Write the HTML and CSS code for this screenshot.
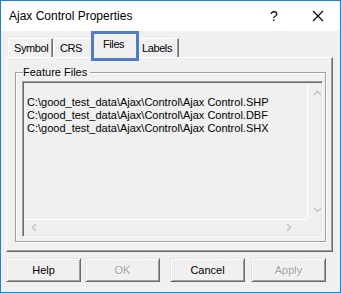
FILE: index.html
```html
<!DOCTYPE html>
<html lang="en">
<head>
    <meta charset="UTF-8">
    <title>Ajax Control Properties</title>
    <link rel="stylesheet" href="styles.css">
</head>
<body>

    <div class="dialog">
        <div class="title-bar">
            <span class="title">Ajax Control Properties</span>
            <span class="title-help">?</span>
            <span class="title-close">
                <svg width="12" height="12" viewBox="0 0 12 12"><path d="M1 1L11 11M11 1L1 11" stroke="#000" stroke-width="1.1" fill="none"/></svg>
            </span>
        </div>

        <div class="dialog-body">
            <div class="tabs">
                <div class="tab">Symbol</div>
                <div class="tab">CRS</div>
                <div class="tab tab-active">Files<span class="highlight"></span></div>
                <div class="tab">Labels</div>
            </div>

            <div class="tab-panel">
                <fieldset class="group">
                    <legend>Feature Files</legend>
                    <div class="list-box">
                        <div class="list-items">
                            <div class="list-item">&nbsp;</div>
                            <div class="list-item">C:\good_test_data\Ajax\Control\Ajax Control.SHP</div>
                            <div class="list-item">C:\good_test_data\Ajax\Control\Ajax Control.DBF</div>
                            <div class="list-item">C:\good_test_data\Ajax\Control\Ajax Control.SHX</div>
                        </div>
                        <div class="vscroll">
                            <svg width="9" height="6" viewBox="0 0 9 6"><path d="M1 5L4.5 1.5L8 5" stroke="#c6c6c6" stroke-width="1.6" fill="none"/></svg>
                            <svg width="9" height="6" viewBox="0 0 9 6"><path d="M1 1L4.5 4.5L8 1" stroke="#c6c6c6" stroke-width="1.6" fill="none"/></svg>
                        </div>
                        <div class="hscroll">
                            <svg width="6" height="9" viewBox="0 0 6 9"><path d="M5 1L1.5 4.5L5 8" stroke="#c6c6c6" stroke-width="1.6" fill="none"/></svg>
                            <svg width="6" height="9" viewBox="0 0 6 9"><path d="M1 1L4.5 4.5L1 8" stroke="#c6c6c6" stroke-width="1.6" fill="none"/></svg>
                        </div>
                        <div class="corner"></div>
                    </div>
                </fieldset>
            </div>

            <div class="buttons">
                <button class="btn">Help</button>
                <button class="btn" disabled>OK</button>
                <button class="btn btn-gap">Cancel</button>
                <button class="btn btn-gap" disabled>Apply</button>
            </div>
        </div>
    </div>

</body>
</html>
```

FILE: styles.css
```css
body {
    margin: 0;
    padding: 0;
    background-color: #fff;
    font-family: 'Liberation Sans', Arial, sans-serif;
    font-size: 11px;
}

.dialog {
    width: 341px;
    height: 293px;
    box-sizing: border-box;
    border: 1px solid #1883d7;
    display: flex;
    flex-direction: column;
    background-color: #f0f0f0;
}

.title-bar {
    height: 30px;
    background-color: #fff;
    display: flex;
    align-items: center;
    font-size: 12px;
    color: #000;
}

.title {
    padding-left: 8px;
    flex: 1;
}

.title-help {
    width: 12px;
    font-size: 14px;
    margin-right: 30px;
}

.title-close {
    display: flex;
    margin-right: 16px;
}

.dialog-body {
    flex: 1;
    padding: 2px 7px 0 5px;
    display: flex;
    flex-direction: column;
}

.tabs {
    display: flex;
    align-items: flex-end;
    height: 24px;
    padding-left: 2px;
    position: relative;
    z-index: 1;
}

.tab {
    height: 19px;
    line-height: 18px;
    padding: 0 5px;
    box-sizing: border-box;
    border-top: 1px solid #fff;
    border-left: 1px solid #fff;
    border-right: 1px solid #696969;
    box-shadow: inset -1px 0 0 #a0a0a0;
    color: #000;
    letter-spacing: -0.4px;
    white-space: nowrap;
}

.tab:first-child {
    width: 45px;
}

.tab:nth-child(2) {
    width: 40px;
    padding-left: 6px;
}

.tab:last-child {
    width: 41px;
    padding-left: 3px;
}

.tab-active {
    position: relative;
    width: 47px;
    height: 25px;
    line-height: 20px;
    padding-left: 10px;
    margin: 0 -1px -1px -1px;
    background-color: #f0f0f0;
}

.highlight {
    position: absolute;
    left: -2px;
    top: -3px;
    width: 48px;
    height: 30px;
    box-sizing: border-box;
    border: 3px solid #4f7dc9;
}

.tab-panel {
    height: 195px;
    box-sizing: border-box;
    border-top: 1px solid #fff;
    border-left: 1px solid #fff;
    border-right: 1px solid #696969;
    border-bottom: 1px solid #696969;
    box-shadow: inset -1px -1px 0 #a0a0a0;
    padding: 8px 6px 9px 8px;
    display: flex;
}

.group {
    flex: 1;
    margin: 0;
    padding: 2px 2px 4px 6px;
    border: 1px solid #a0a0a0;
    box-shadow: 1px 1px 0 #fff, inset 1px 1px 0 #fff;
    display: flex;
    min-width: 0;
}

.group legend {
    padding: 0 3px 0 0;
    margin-left: 1px;
    line-height: 13px;
    color: #000;
}

.list-box {
    flex: 1;
    display: grid;
    grid-template-columns: 1fr 14px;
    grid-template-rows: 1fr 16px;
    border: 1px solid;
    border-color: #a0a0a0 #fff #fff #a0a0a0;
    box-shadow: inset 1px 1px 0 #696969, inset -1px -1px 0 #e3e3e3;
    padding: 1px;
    background-color: #f0f0f0;
    overflow: hidden;
}

.list-items {
    padding: 0 0 0 3px;
    overflow: hidden;
}

.list-item {
    line-height: 13px;
    white-space: nowrap;
    color: #000;
}

.vscroll {
    border-left: 1px solid #fff;
    display: flex;
    flex-direction: column;
    justify-content: space-between;
    align-items: center;
    padding: 7px 0 6px 5px;
}

.hscroll {
    border-top: 1px solid #fff;
    display: flex;
    justify-content: space-between;
    align-items: center;
    padding: 0 15px 0 7px;
}

.buttons {
    display: flex;
    margin-top: 6px;
}

.btn {
    width: 75px;
    height: 24px;
    margin-right: 4px;
    font-family: 'Liberation Sans', Arial, sans-serif;
    font-size: 11px;
    color: #000;
    background-color: #f0f0f0;
    border: 1px solid;
    border-color: #e3e3e3 #696969 #696969 #e3e3e3;
    box-shadow: inset 1px 1px 0 #fff, inset -1px -1px 0 #a0a0a0;
    padding: 0;
}

.btn-gap {
    margin-left: 6px;
    margin-right: 0;
}

.btn:disabled {
    color: #a0a0a0;
    text-shadow: 1px 1px 0 #fff;
}
```
